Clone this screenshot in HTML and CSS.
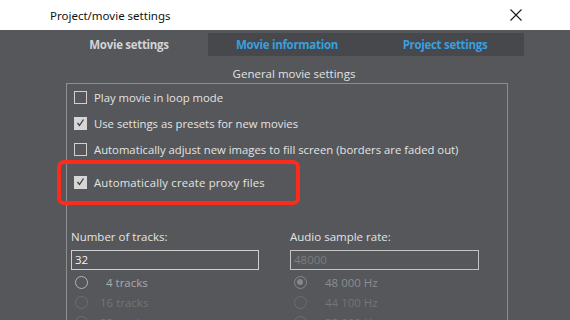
FILE: index.html
```html
<!DOCTYPE html>
<html>
<head>
<meta charset="utf-8">
<link rel="stylesheet" href="styles.css">
</head>
<body>
<div class="window">
  <div class="titlebar">
    <span class="title">Project/movie settings</span>
    <svg class="close" width="12" height="12" viewBox="0 0 12 12"><path d="M0.5 0.5 L11.5 11.5 M11.5 0.5 L0.5 11.5" stroke="#1a1a1a" stroke-width="1.1" fill="none"/></svg>
  </div>
  <div class="tabs">
    <div class="tab active">Movie settings</div>
    <div class="tab">Movie information</div>
    <div class="tab">Project settings</div>
  </div>
  <div class="section-title">General movie settings</div>
  <div class="group">
    <label class="check-row"><span class="box"></span><span>Play movie in loop mode</span></label>
    <label class="check-row"><span class="box checked"><svg width="13" height="13" viewBox="0 0 13 13"><path d="M3.5 7 L5.5 9.5 L9.5 3.5" stroke="#3c3d40" stroke-width="1.3" fill="none"/></svg></span><span>Use settings as presets for new movies</span></label>
    <label class="check-row"><span class="box"></span><span>Automatically adjust new images to fill screen (borders are faded out)</span></label>
    <label class="check-row highlighted"><span class="box checked"><svg width="13" height="13" viewBox="0 0 13 13"><path d="M3.5 7 L5.5 9.5 L9.5 3.5" stroke="#3c3d40" stroke-width="1.3" fill="none"/></svg></span><span class="wide">Automatically create proxy files</span><span class="highlight"></span></label>

    <div class="fields">
      <div class="col">
        <div class="field-label">Number of tracks:</div>
        <div class="input">32</div>
        <div class="radio-row"><span class="radio"></span><span class="rlabel tracks">4 tracks</span></div>
        <div class="radio-row faded"><span class="radio"></span><span class="rlabel tracks2">16 tracks</span></div>
        <div class="radio-row faded"><span class="radio"></span><span class="rlabel tracks2">32 tracks</span></div>
      </div>
      <div class="col">
        <div class="field-label">Audio sample rate:</div>
        <div class="input disabled">48000</div>
        <div class="radio-row dim"><span class="radio on"></span><span class="rlabel hz">48 000 Hz</span></div>
        <div class="radio-row faded"><span class="radio"></span><span class="rlabel hz">44 100 Hz</span></div>
        <div class="radio-row faded"><span class="radio"></span><span class="rlabel hz">32 000 Hz</span></div>
      </div>
    </div>
  </div>
</div>
</body>
</html>
```
FILE: styles.css
```css
* { box-sizing: border-box; }
html, body { margin: 0; padding: 0; }
body {
  width: 570px;
  height: 320px;
  overflow: hidden;
  background: #55575a;
  font-family: "Open Sans", "Noto Sans", sans-serif;
}
.window { width: 570px; height: 320px; }
.titlebar {
  height: 30px;
  background: #ffffff;
  display: flex;
  align-items: center;
  justify-content: space-between;
  padding: 0 48px 0 50px;
}
.title {
  font-family: "Noto Sans", sans-serif;
  font-size: 11.5px;
  color: #111;
}
.close { display: block; }
.tabs {
  display: flex;
  padding: 3px 0 0 50px;
  height: 26px;
}
.tab {
  width: 158px;
  height: 23px;
  display: flex;
  align-items: center;
  justify-content: center;
  font-size: 11.5px;
  font-weight: 700;
  color: #3a9fdf;
  background: #46484b;
  letter-spacing: -0.3px;
}
.tab.active {
  background: transparent;
  color: #d2d3d4;
}
.section-title {
  text-align: center;
  font-size: 11.5px;
  color: #e2e2e2;
  height: 27px;
  line-height: 16px;
  padding: 10px 0 0 18px;
}
.group {
  margin-left: 66px;
  width: 442px;
  height: 300px;
  border: 1px solid #8c8e91;
  border-bottom: none;
  padding: 0 0 0 4px;
}
.check-row {
  display: flex;
  align-items: center;
  height: 26px;
  padding-left: 3px;
  gap: 7px;
  font-size: 11.3px;
  color: #e4e4e4;
  position: relative;
}
.wide { letter-spacing: 0.2px; }
.box {
  width: 13px;
  height: 13px;
  border: 1.5px solid #d0d0d0;
  flex: none;
  display: flex;
}
.box.checked {
  background: #d6d6d6;
  border-color: #d6d6d6;
}
.box.checked svg { margin: -1.5px; }
.highlighted { margin-top: 7px; }
.highlight {
  position: absolute;
  left: -14px;
  top: -9px;
  width: 243px;
  height: 45px;
  border: 4.5px solid #fc2b1b;
  border-radius: 7px;
}
.fields {
  display: flex;
  gap: 31px;
  margin-top: 34px;
}
.col { width: 188px; display: flex; flex-direction: column; }
.col + .col { width: 189px; }
.field-label {
  font-size: 11.5px;
  color: #e4e4e4;
  height: 16px;
  line-height: 16px;
  margin-bottom: 5px;
}
.input {
  height: 20px;
  border: 1.5px solid #cfcfcf;
  font-size: 11.5px;
  color: #f2f2f2;
  padding-left: 3px;
  line-height: 17px;
  margin-bottom: 2px;
}
.input.disabled { color: #7c7e81; border-color: #c4c4c4; }
.radio-row {
  display: flex;
  align-items: center;
  height: 20px;
  font-size: 11.5px;
  color: #a9abad;
  padding-left: 4px;
}
.radio {
  width: 13px;
  height: 13px;
  border-radius: 50%;
  border: 1.5px solid #b4b5b7;
  flex: none;
  position: relative;
}
.radio.on::after {
  content: "";
  position: absolute;
  left: 2px; top: 2px;
  width: 6px; height: 6px;
  border-radius: 50%;
  background: #85878a;
}
.dim { color: #8b8d90; }
.dim .radio { border-color: #87898c; }
.faded { color: #737578; }
.faded .radio { border-color: #6c6e71; }
.rlabel.tracks { margin-left: 18px; }
.rlabel.tracks2 { margin-left: 12px; }
.rlabel.hz { margin-left: 18px; }
```
